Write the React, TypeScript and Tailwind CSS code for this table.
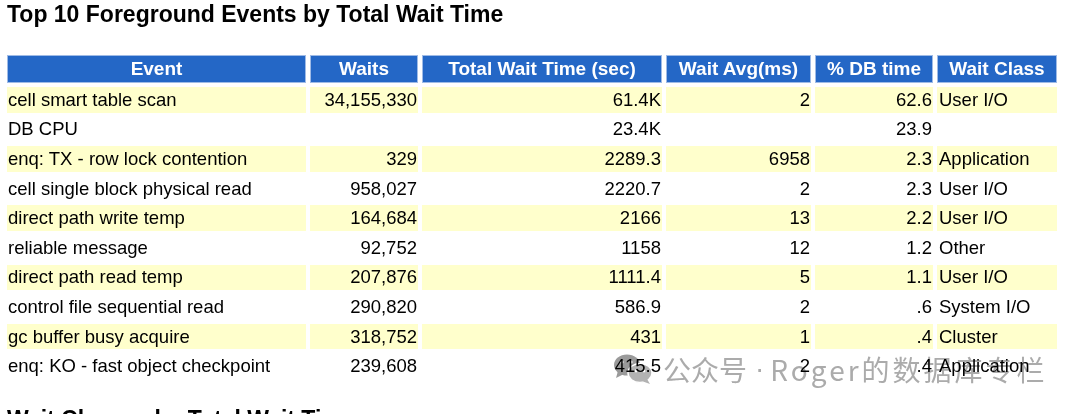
import React from "react";

type Row = {
  event: string;
  waits: string;
  total: string;
  avg: string;
  dbTime: string;
  waitClass: string;
};

const rows: Row[] = [
  { event: "cell smart table scan", waits: "34,155,330", total: "61.4K", avg: "2", dbTime: "62.6", waitClass: "User I/O" },
  { event: "DB CPU", waits: "", total: "23.4K", avg: "", dbTime: "23.9", waitClass: "" },
  { event: "enq: TX - row lock contention", waits: "329", total: "2289.3", avg: "6958", dbTime: "2.3", waitClass: "Application" },
  { event: "cell single block physical read", waits: "958,027", total: "2220.7", avg: "2", dbTime: "2.3", waitClass: "User I/O" },
  { event: "direct path write temp", waits: "164,684", total: "2166", avg: "13", dbTime: "2.2", waitClass: "User I/O" },
  { event: "reliable message", waits: "92,752", total: "1158", avg: "12", dbTime: "1.2", waitClass: "Other" },
  { event: "direct path read temp", waits: "207,876", total: "1111.4", avg: "5", dbTime: "1.1", waitClass: "User I/O" },
  { event: "control file sequential read", waits: "290,820", total: "586.9", avg: "2", dbTime: ".6", waitClass: "System I/O" },
  { event: "gc buffer busy acquire", waits: "318,752", total: "431", avg: "1", dbTime: ".4", waitClass: "Cluster" },
  { event: "enq: KO - fast object checkpoint", waits: "239,608", total: "415.5", avg: "2", dbTime: ".4", waitClass: "Application" },
];

const headers = ["Event", "Waits", "Total Wait Time (sec)", "Wait Avg(ms)", "% DB time", "Wait Class"];

function WeChatIcon() {
  return (
    <svg width="40" height="30" viewBox="0 0 40 30">
      <ellipse cx="14" cy="11" rx="13" ry="10.5" fill="#9a9a9a" />
      <path d="M5 17 L3 24 L11 20 Z" fill="#9a9a9a" />
      <ellipse cx="27" cy="19" rx="12" ry="9.5" fill="#b2b2b2" stroke="#ffffff" strokeWidth="1.5" />
      <path d="M34 25 L37 30 L30 27.5 Z" fill="#b2b2b2" />
      <circle cx="9" cy="8" r="1.6" fill="#ffffff" />
      <circle cx="18" cy="8" r="1.6" fill="#ffffff" />
      <circle cx="23" cy="17" r="1.4" fill="#ffffff" />
      <circle cx="31" cy="17" r="1.4" fill="#ffffff" />
    </svg>
  );
}

export default function App() {
  return (
    <div className="relative w-[1080px] h-[414px] overflow-hidden bg-white text-black font-['Liberation_Sans',Arial,sans-serif]">
      <h1 className="ml-[7px] pt-[1px] text-[23px] leading-[26px] font-bold">Top 10 Foreground Events by Total Wait Time</h1>

      <table className="mt-[24px] ml-[3px] table-fixed border-separate border-spacing-[4px] text-[18.5px] leading-[20px]">
        <colgroup>
          <col className="w-[299px]" />
          <col className="w-[108px]" />
          <col className="w-[240px]" />
          <col className="w-[145px]" />
          <col className="w-[118px]" />
          <col className="w-[120px]" />
        </colgroup>
        <thead>
          <tr>
            {headers.map((h) => (
              <th key={h} className="h-[28px] p-0 bg-[#2467c6] border border-[#9fbbe6] text-white text-[19px] font-bold text-center whitespace-nowrap">
                {h}
              </th>
            ))}
          </tr>
        </thead>
        <tbody>
          {rows.map((r, i) => {
            const bg = i % 2 === 0 ? "bg-[#ffffcc]" : "bg-white";
            return (
              <tr key={r.event}>
                <td className={`h-[25.6px] p-0 pl-[1px] text-left whitespace-nowrap ${bg}`}>{r.event}</td>
                <td className={`h-[25.6px] p-0 pr-[1px] text-right ${bg}`}>{r.waits}</td>
                <td className={`h-[25.6px] p-0 pr-[1px] text-right ${bg}`}>{r.total}</td>
                <td className={`h-[25.6px] p-0 pr-[1px] text-right ${bg}`}>{r.avg}</td>
                <td className={`h-[25.6px] p-0 pr-[1px] text-right ${bg}`}>{r.dbTime}</td>
                <td className={`h-[25.6px] p-0 pl-[2px] text-left whitespace-nowrap ${bg}`}>{r.waitClass}</td>
              </tr>
            );
          })}
        </tbody>
      </table>

      <h2 className="ml-[7px] mt-[23px] text-[23px] leading-[26px] font-bold whitespace-nowrap">Wait Classes by Total Wait Time</h2>

      {/* watermark */}
      <div className="absolute left-[613px] top-[353px] flex items-center mix-blend-multiply pointer-events-none text-[#ababab] font-['Noto_Sans_CJK_SC',sans-serif] text-[28px] leading-[32px]">
        <WeChatIcon />
        <span className="ml-[10px]">公众号</span>
        <span className="ml-[8px] font-['Liberation_Sans',sans-serif]">·</span>
        <span className="ml-[6px] tracking-[3px]">Roger的数据库专栏</span>
      </div>
    </div>
  );
}
